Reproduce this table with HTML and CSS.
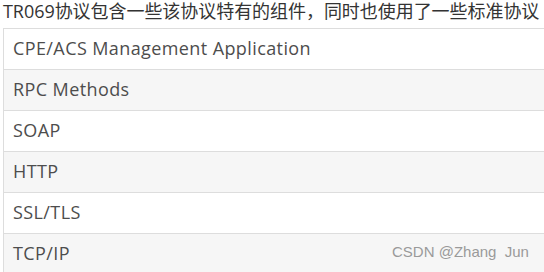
FILE: index.html
```html
<!DOCTYPE html>
<html lang="zh">
<head>
<meta charset="utf-8">
<link rel="stylesheet" href="styles.css">
</head>
<body>
<p class="intro">TR069协议包含一些该协议特有的组件，同时也使用了一些标准协议</p>
<table class="stack">
<tr><td>CPE/ACS Management Application</td></tr>
<tr><td>RPC Methods</td></tr>
<tr><td>SOAP</td></tr>
<tr><td>HTTP</td></tr>
<tr><td>SSL/TLS</td></tr>
<tr><td>TCP/IP</td></tr>
</table>
<span class="mark">CSDN @Zhang&nbsp; Jun</span>
</body>
</html>
```
FILE: styles.css
```css
html, body {
  margin: 0;
  padding: 0;
  background: #fff;
  overflow: hidden;
}
body {
  position: relative;
  width: 544px;
  height: 272px;
  font-family: "Open Sans", "Noto Sans CJK SC", sans-serif;
  color: #333;
}
.intro {
  margin: 0;
  padding: 0 0 0 3px;
  height: 28px;
  font-size: 18px;
  line-height: 22px;
  white-space: nowrap;
  letter-spacing: -0.05px;
}
.stack {
  margin-left: 3px;
  width: 560px;
  border-collapse: collapse;
}
.stack td {
  padding: 0 0 2px 9px;
  border: 1px solid #dddddd;
  font-size: 18px;
  letter-spacing: 0.4px;
  color: #4d4d4d;
  box-sizing: border-box;
  height: 41px;
}
.stack tr:nth-child(even) td {
  background: #f6f6f6;
}
.mark {
  position: absolute;
  left: 392px;
  top: 243px;
  font-family: "Liberation Sans", sans-serif;
  font-size: 15px;
  color: #9a9a9a;
}
```
